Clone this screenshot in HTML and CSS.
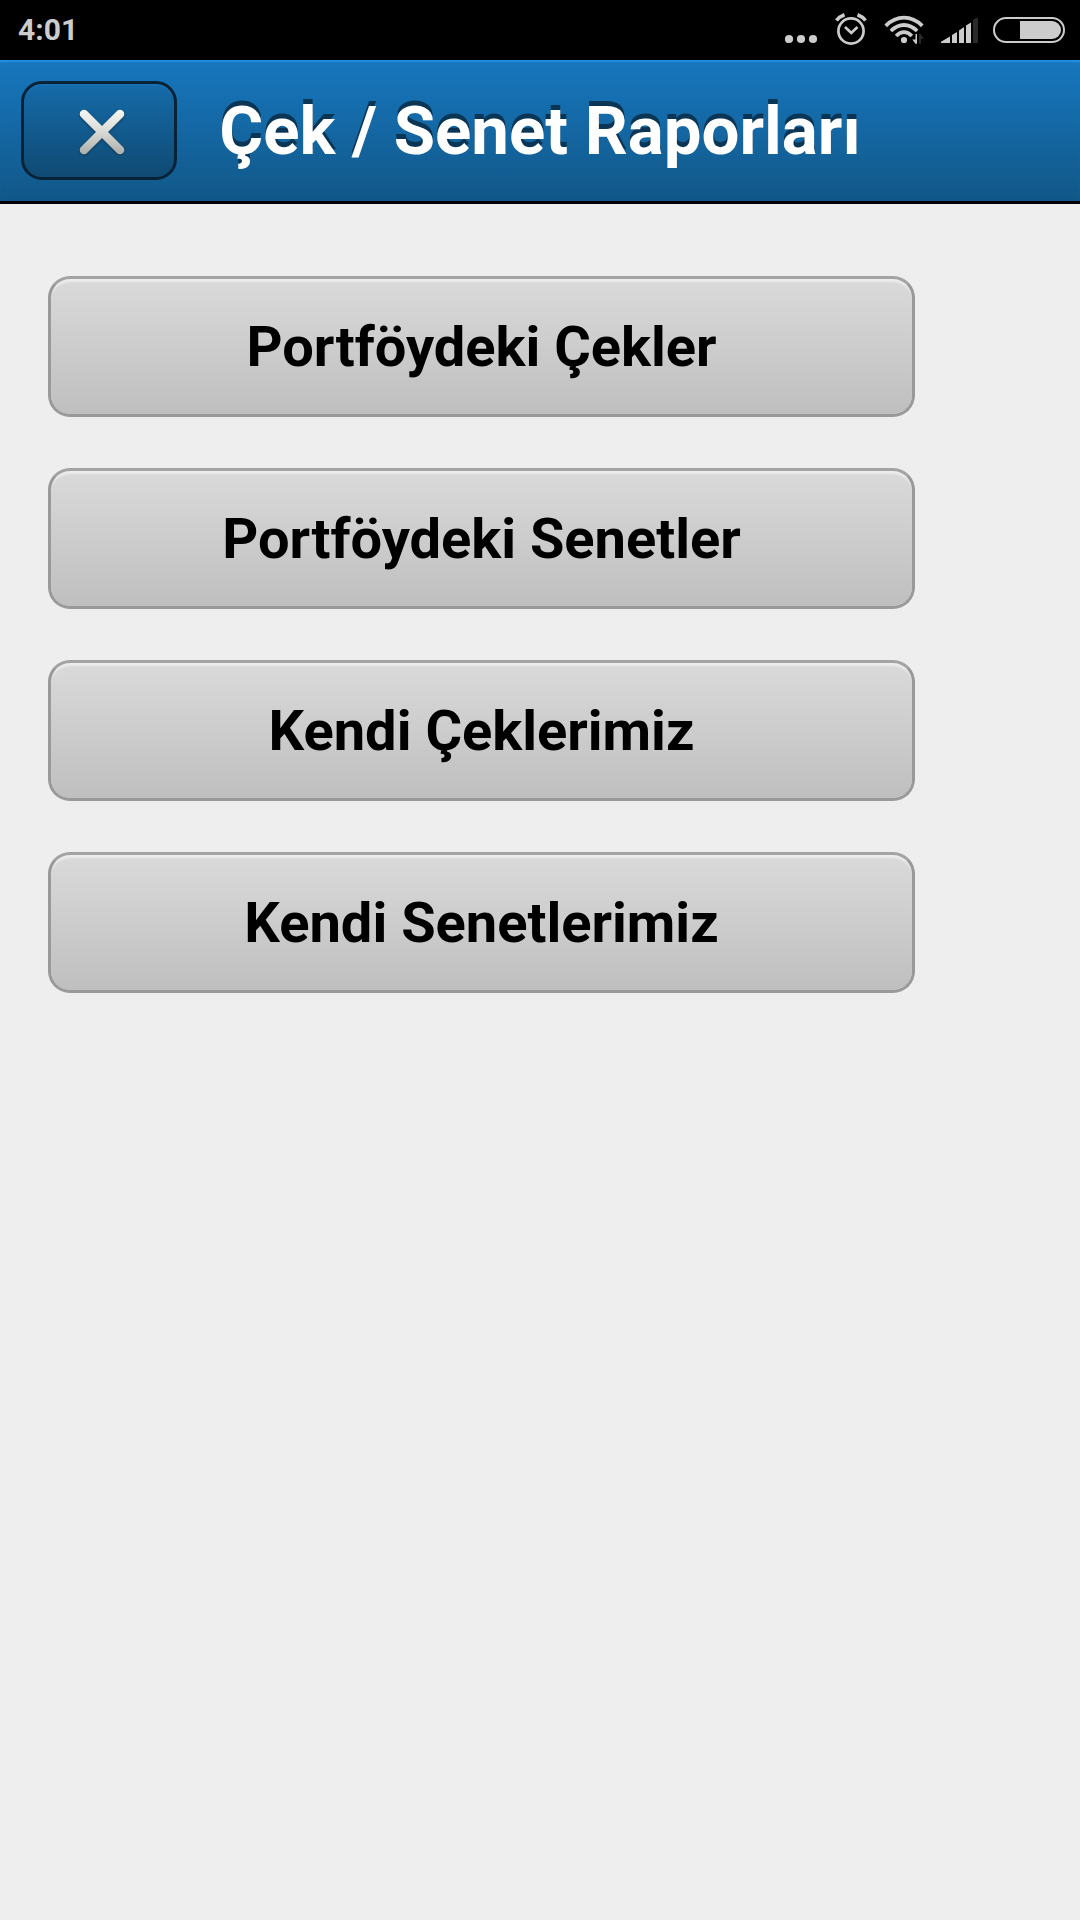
FILE: index.html
```html
<!DOCTYPE html>
<html lang="tr">
<head>
<meta charset="utf-8">
<title>Çek / Senet Raporları</title>
<link rel="stylesheet" href="styles.css">
</head>
<body>
<div class="status">
  <span class="clock">4:01</span>
  <div class="tray">
    <svg class="glyph" width="34" height="60" viewBox="785 0 34 60"><circle cx="789" cy="39" r="4.1"/><circle cx="801" cy="39" r="4.1"/><circle cx="813" cy="39" r="4.1"/></svg>
    <svg class="glyph" width="35" height="60" viewBox="834 0 35 60">
      <g class="line"><circle cx="851" cy="31" r="12.6"/><path d="M845 27l6.3 6L857.500 27"/></g>
      <g class="line thick"><path d="M836.500 20.500Q839.500 16.500 844.500 14.700"/><path d="M857.500 14.700Q862.500 16.500 865.500 20.500"/></g>
    </svg>
    <svg class="glyph" width="42" height="60" viewBox="884 0 42 60">
      <g class="line arcs"><path d="M885.700 25.800Q894 17.700 904 17.700T922.300 25.800"/><path d="M890.900 31Q897 25 904 25T917.100 31"/><path d="M896.100 36Q900 32.200 904 32.200T911.900 36"/></g>
      <circle cx="904" cy="40" r="3.1"/>
      <path class="gap" d="M912 44V40L918 32H926V44z"/>
      <path d="M915.500 34H917V43.700H915.500L912.300 39.500H915.500z"/><path class="dim" d="M919 34H920.500L924 38.700H921V43.700H919z"/>
    </svg>
    <svg class="glyph" width="37" height="60" viewBox="941 0 37 60"><path d="M941 43V41.800L950 36.500V43zM952 43V35L957 32V43zM959 43V30.500L964 27V43zM966 43V25.500L971 22.500V43z"/><path class="dim" d="M973 43V20L976 18H978V43z"/></svg>
    <svg class="glyph" width="72" height="60" viewBox="993 0 72 60"><rect class="shell" x="994" y="18" width="70" height="24" rx="12"/><path d="M1020 21H1052A9 9 0 0 1 1052 39H1020z"/></svg>
  </div>
</div>
<header class="bar">
  <button class="close" aria-label="Kapat">
    <svg width="54" height="54" viewBox="0 0 54 54">
      <defs>
        <linearGradient id="silver" gradientUnits="userSpaceOnUse" x1="0" y1="4" x2="0" y2="50"><stop offset="0" stop-color="#f8f9f5"/><stop offset=".5" stop-color="#d9dad5"/><stop offset="1" stop-color="#aaaca7"/></linearGradient>
        <filter id="soft" x="-20%" y="-20%" width="140%" height="140%"><feGaussianBlur stdDeviation="1.2"/></filter>
      </defs>
      <path class="cross-shadow" filter="url(#soft)" d="M9 10L45 46M45 10L9 46"/>
      <path class="cross" stroke="url(#silver)" d="M9 9L45 45M45 9L9 45"/>
    </svg>
  </button>
  <h1 class="title">Çek / Senet Raporları</h1>
</header>
<main class="menu">
  <button class="item">Portföydeki Çekler</button>
  <button class="item">Portföydeki Senetler</button>
  <button class="item">Kendi Çeklerimiz</button>
  <button class="item">Kendi Senetlerimiz</button>
</main>
</body>
</html>
```
FILE: styles.css
```css
* { box-sizing: border-box; }
body { margin: 0; min-height: 1920px; background: #eee; font-family: Roboto, sans-serif; }
button { font-family: inherit; margin: 0; }
.status { height: 60px; padding: 0 15px 0 18px; background: #000; display: flex; justify-content: space-between; align-items: center; }
.clock { color: #ccc; font-size: 30px; font-weight: 700; line-height: 60px; }
.tray { display: flex; gap: 15px; }
.glyph { display: block; fill: #ccc; }
.line { fill: none; stroke: #ccc; stroke-width: 2.7; }
.thick { stroke-width: 3.6; }
.arcs { stroke-width: 3.8; }
.gap { fill: #000; }
.dim { fill: #292929; }
.shell { fill: none; stroke: #ccc; stroke-width: 2; }
.bar { height: 144px; padding: 0 21px; display: grid; grid-template-columns: 1fr auto 1fr; align-items: center; border-bottom: 3px solid #000; background: linear-gradient(#1777be, #115788); box-shadow: inset 0 3px 2px -1px #2192e5; }
.close { width: 156px; height: 99px; padding: 3px 0 0 6px; display: flex; align-items: center; justify-content: center; border: 3px solid #082236; border-radius: 21px; background: linear-gradient(#156ba9, #0f4a73) padding-box; box-shadow: inset 0 3px 1px -1px #1971b3; }
.cross { fill: none; stroke-width: 8.500; stroke-linecap: round; }
.cross-shadow { fill: none; stroke: #17364b; stroke-opacity: .7; stroke-width: 9; stroke-linecap: round; }
.title { margin: 0; color: #fff; font-size: 67.2px; font-weight: 700; line-height: 84px; white-space: nowrap; text-shadow: 0 -5px 0 #0a3554; }
.menu { width: 963px; padding: 72px 48px; display: flex; flex-direction: column; gap: 51px; }
.item { height: 141px; padding: 0; border: 3px solid #999; border-top-color: #a3a3a3; border-radius: 22px; background: linear-gradient(#dadada, #bfbfbf) padding-box; box-shadow: inset 0 4px 2px -1px #ececec; color: #000; font-size: 56px; font-weight: 700; }
```
